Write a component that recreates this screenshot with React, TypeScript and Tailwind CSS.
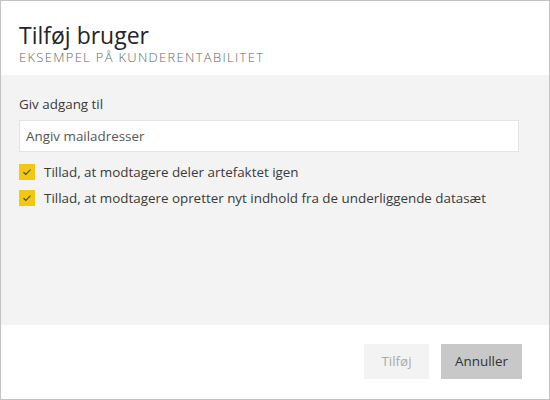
import React from "react";

function Check() {
  return (
    <span className="flex h-4 w-4 shrink-0 items-center justify-center bg-[#f2c811]">
      <svg width="10" height="8" viewBox="0 0 10 8" fill="none">
        <path d="M1.5 4.2 L3.8 6.3 L8.5 1.6" stroke="#4a4a4a" strokeWidth="1.2" />
      </svg>
    </span>
  );
}

export default function App() {
  return (
    <div
      className="flex h-[400px] w-[550px] flex-col border border-[#c2c2c2] bg-white text-[#333]"
      style={{ fontFamily: '"Open Sans", "Noto Sans", sans-serif' }}
    >
      <div className="flex h-[74px] flex-col px-[18px] pt-[19px]">
        <div className="text-[23px] leading-[30px] text-[#252525]">Tilføj bruger</div>
        <div className="text-[13px] leading-[15px] font-light tracking-[1.3px] uppercase text-[#666]">
          Eksempel på kunderentabilitet
        </div>
      </div>
      <div className="flex h-[250px] flex-col bg-[#f3f3f3] px-[18px] pt-[20px]">
        <div className="text-[13.4px] leading-[18px] text-[#3a3a3a]">Giv adgang til</div>
        <div className="mt-[7px] flex h-[32px] w-[500px] items-center border border-[#e4e4e4] bg-white px-[6px] text-[13.4px] text-[#555]">
          Angiv mailadresser
        </div>
        <div className="mt-[12px] flex flex-col gap-[10px]">
          <div className="flex items-center gap-[9px] text-[13.4px] leading-4 text-[#3a3a3a]">
            <Check />
            <span>Tillad, at modtagere deler artefaktet igen</span>
          </div>
          <div className="flex items-center gap-[9px] text-[13.4px] leading-4 text-[#3a3a3a]">
            <Check />
            <span>Tillad, at modtagere opretter nyt indhold fra de underliggende datasæt</span>
          </div>
        </div>
      </div>
      <div className="flex flex-1 items-start justify-end gap-3 pr-[27px] pt-[19px]">
        <button className="h-[35px] w-[65px] bg-[#f3f3f3] text-[13.4px] text-[#aaa]">Tilføj</button>
        <button className="h-[35px] w-[81px] bg-[#c8c8c8] text-[13.4px] text-[#333]">Annuller</button>
      </div>
    </div>
  );
}
